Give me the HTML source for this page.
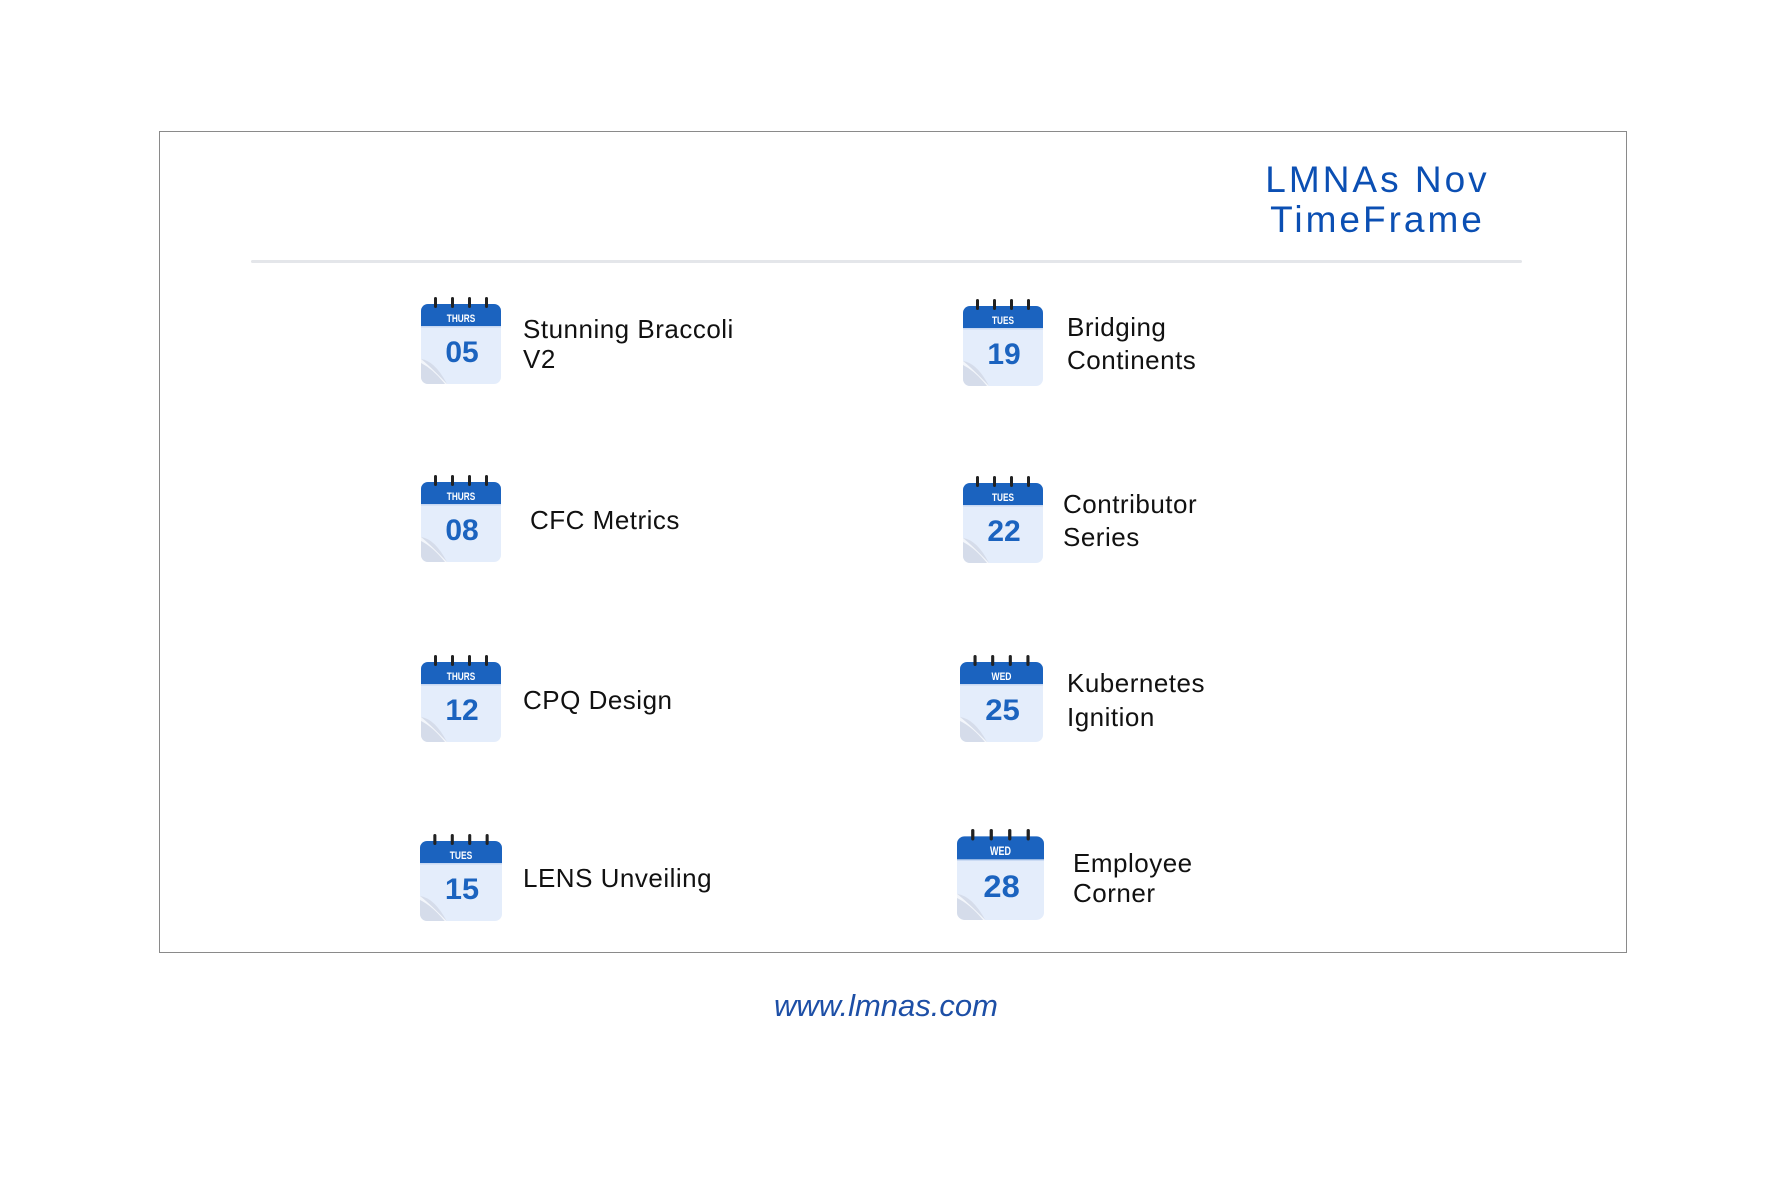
<!DOCTYPE html>
<html><head><meta charset="utf-8"><style>
*{margin:0;padding:0;box-sizing:border-box}
body{width:1772px;height:1181px;background:#fff;position:relative;overflow:hidden;font-family:"Liberation Sans",sans-serif}
.box{position:absolute;left:159px;top:131px;width:1468px;height:822px;border:1.5px solid #8a8a8a}
.title{position:absolute;left:1240px;top:160px;width:275px;text-align:center;color:#0b4fb3;font-size:37px;letter-spacing:3px;line-height:40px}
.rule{position:absolute;left:251px;top:260px;width:1271px;height:3px;background:#e4e6ea;border-radius:2px}
.cal{position:absolute;width:80px;height:88px}
.t{position:absolute;font-size:26px;color:#111;line-height:30px;letter-spacing:0.5px}
.foot{position:absolute;left:0;width:1772px;top:988px;text-align:center;font-style:italic;color:#1d4fa6;font-size:31px}
</style></head><body>
<div class="box"></div>
<div class="title">LMNAs Nov<br>TimeFrame</div>
<div class="rule"></div>

<svg width="0" height="0" style="position:absolute"><defs>
<g id="c">
<rect x="0" y="7" width="80" height="80" rx="7" fill="#e4edfb"/>
<path d="M0 14a7 7 0 0 1 7-7h66a7 7 0 0 1 7 7v16H0z" fill="#1b63bf"/>
<rect x="0" y="29" width="80" height="1.5" fill="#c7d8f2"/>
<rect x="13" y="0" width="3" height="11" rx="1.5" fill="#222"/>
<rect x="30" y="0" width="3" height="11" rx="1.5" fill="#222"/>
<rect x="47" y="0" width="3" height="11" rx="1.5" fill="#222"/>
<rect x="64" y="0" width="3" height="11" rx="1.5" fill="#222"/>
<path d="M0 62 Q14 64 26 87 H7 A7 7 0 0 1 0 80Z" fill="#d5dcea"/>
<path d="M0 62 Q10 70 26 87 L24 87 Q12 72 0 66Z" fill="#f3f6fb"/>
</g></defs></svg>

<svg class="cal" style="left:421px;top:297px" viewBox="0 0 80 88"><use href="#c"/><text x="40" y="25" text-anchor="middle" font-size="11" font-weight="bold" fill="#fff" transform="translate(40 0) scale(.75 1) translate(-40 0)">THURS</text><text x="41" y="65" text-anchor="middle" font-size="30" font-weight="bold" fill="#1b63bf">05</text></svg>
<svg class="cal" style="left:421px;top:475px" viewBox="0 0 80 88"><use href="#c"/><text x="40" y="25" text-anchor="middle" font-size="11" font-weight="bold" fill="#fff" transform="translate(40 0) scale(.75 1) translate(-40 0)">THURS</text><text x="41" y="65" text-anchor="middle" font-size="30" font-weight="bold" fill="#1b63bf">08</text></svg>
<svg class="cal" style="left:421px;top:655px" viewBox="0 0 80 88"><use href="#c"/><text x="40" y="25" text-anchor="middle" font-size="11" font-weight="bold" fill="#fff" transform="translate(40 0) scale(.75 1) translate(-40 0)">THURS</text><text x="41" y="65" text-anchor="middle" font-size="30" font-weight="bold" fill="#1b63bf">12</text></svg>
<svg class="cal" style="left:420px;top:834px;width:82px" viewBox="0 0 80 88" preserveAspectRatio="none"><use href="#c"/><text x="40" y="25" text-anchor="middle" font-size="11" font-weight="bold" fill="#fff" transform="translate(40 0) scale(.75 1) translate(-40 0)">TUES</text><text x="41" y="65" text-anchor="middle" font-size="30" font-weight="bold" fill="#1b63bf">15</text></svg>

<svg class="cal" style="left:963px;top:299px" viewBox="0 0 80 88"><use href="#c"/><text x="40" y="25" text-anchor="middle" font-size="11" font-weight="bold" fill="#fff" transform="translate(40 0) scale(.75 1) translate(-40 0)">TUES</text><text x="41" y="65" text-anchor="middle" font-size="30" font-weight="bold" fill="#1b63bf">19</text></svg>
<svg class="cal" style="left:963px;top:476px" viewBox="0 0 80 88"><use href="#c"/><text x="40" y="25" text-anchor="middle" font-size="11" font-weight="bold" fill="#fff" transform="translate(40 0) scale(.75 1) translate(-40 0)">TUES</text><text x="41" y="65" text-anchor="middle" font-size="30" font-weight="bold" fill="#1b63bf">22</text></svg>
<svg class="cal" style="left:960px;top:655px;width:83px" viewBox="0 0 80 88" preserveAspectRatio="none"><use href="#c"/><text x="40" y="25" text-anchor="middle" font-size="11" font-weight="bold" fill="#fff" transform="translate(40 0) scale(.75 1) translate(-40 0)">WED</text><text x="41" y="65" text-anchor="middle" font-size="30" font-weight="bold" fill="#1b63bf">25</text></svg>
<svg class="cal" style="left:957px;top:829px;width:87px;height:92px" viewBox="0 0 80 88" preserveAspectRatio="none"><use href="#c"/><text x="40" y="25" text-anchor="middle" font-size="11" font-weight="bold" fill="#fff" transform="translate(40 0) scale(.75 1) translate(-40 0)">WED</text><text x="41" y="65" text-anchor="middle" font-size="30" font-weight="bold" fill="#1b63bf">28</text></svg>

<div class="t" style="left:523px;top:314px">Stunning Braccoli<br>V2</div>
<div class="t" style="left:530px;top:505px">CFC Metrics</div>
<div class="t" style="left:523px;top:685px">CPQ Design</div>
<div class="t" style="left:523px;top:863px">LENS Unveiling</div>

<div class="t" style="left:1067px;top:311px;line-height:33px">Bridging<br>Continents</div>
<div class="t" style="left:1063px;top:488px;line-height:33px">Contributor<br>Series</div>
<div class="t" style="left:1067px;top:666px;line-height:34px">Kubernetes<br>Ignition</div>
<div class="t" style="left:1073px;top:848px;line-height:30px">Employee<br>Corner</div>

<div class="foot">www.lmnas.com</div>
</body></html>
